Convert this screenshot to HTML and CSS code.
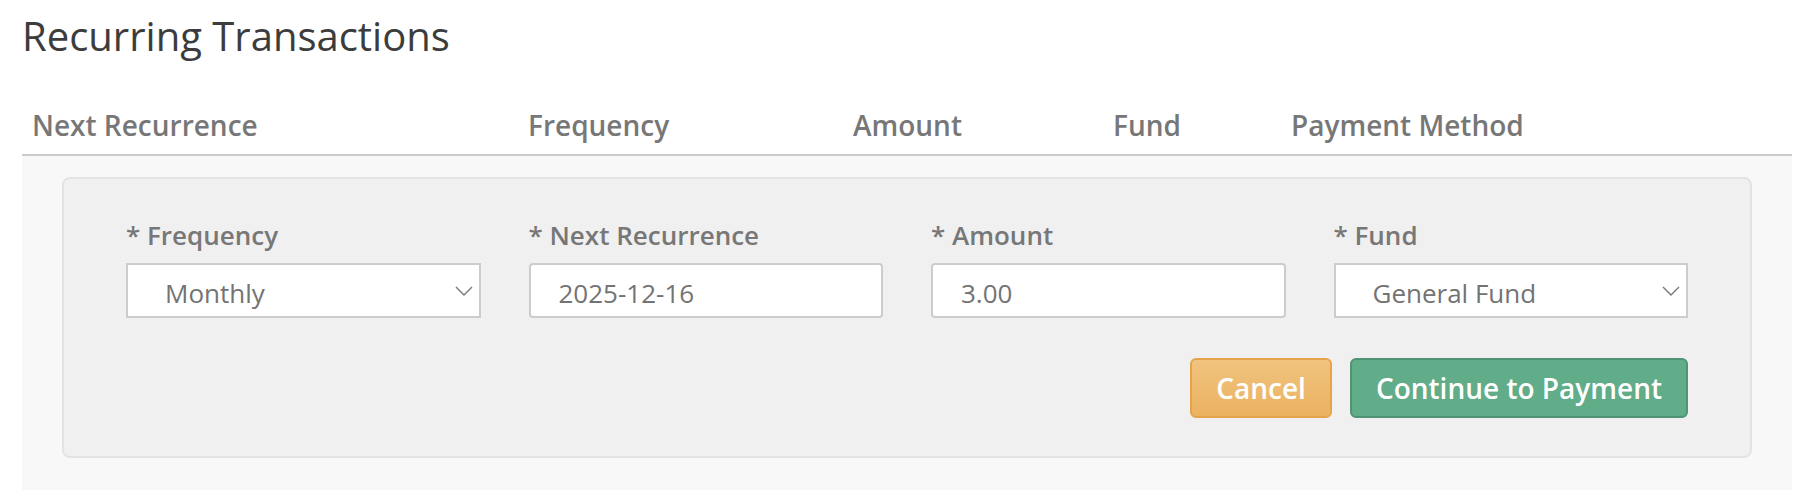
FILE: index.html
```html
<!DOCTYPE html>
<html lang="en">
<head>
<meta charset="utf-8">
<title>Recurring Transactions</title>
<link rel="stylesheet" href="styles.css">
</head>
<body>
<div class="page">
  <h1 class="title">Recurring Transactions</h1>
  <div class="table">
    <div class="thead">
      <div class="th">Next Recurrence</div>
      <div class="th">Frequency</div>
      <div class="th">Amount</div>
      <div class="th">Fund</div>
      <div class="th">Payment Method</div>
    </div>
    <div class="tbody">
      <div class="well">
        <div class="fields">
          <div class="field">
            <label class="label">* Frequency</label>
            <div class="select-wrap">
              <select class="control select"><option>Monthly</option></select>
              <svg class="chevron" width="18" height="10" viewBox="0 0 18 10"><path d="M1 1 L9 9 L17 1" fill="none" stroke="#777" stroke-width="1.4"/></svg>
            </div>
          </div>
          <div class="field">
            <label class="label">* Next Recurrence</label>
            <input class="control input" type="text" value="2025-12-16">
          </div>
          <div class="field">
            <label class="label">* Amount</label>
            <input class="control input" type="text" value="3.00">
          </div>
          <div class="field">
            <label class="label">* Fund</label>
            <div class="select-wrap">
              <select class="control select"><option>General Fund</option></select>
              <svg class="chevron" width="18" height="10" viewBox="0 0 18 10"><path d="M1 1 L9 9 L17 1" fill="none" stroke="#777" stroke-width="1.4"/></svg>
            </div>
          </div>
        </div>
        <div class="actions">
          <button class="btn btn-cancel" type="button">Cancel</button>
          <button class="btn btn-primary" type="button">Continue to Payment</button>
        </div>
      </div>
    </div>
  </div>
</div>
</body>
</html>
```
FILE: styles.css
```css
body {
  margin: 0;
  background: #fff;
  font-family: "Open Sans", "Noto Sans", sans-serif;
}

.page {
  padding: 12px 12px 0 22px;
}

.title {
  margin: 0 0 37px;
  font-size: 40px;
  font-weight: 400;
  line-height: 48px;
  color: #3c3c3c;
}

.thead {
  display: grid;
  grid-template-columns: 496px 325px 260px 178px 1fr;
  border-bottom: 2px solid #cccccc;
}

.th {
  padding: 8px 8px 9px 10px;
  font-size: 28px;
  font-weight: 600;
  line-height: 40px;
  color: #777;
}

.tbody {
  background: #f8f8f8;
  padding: 21px 40px 40px;
}

.well {
  background: #f0f0f0;
  border: 2px solid #e3e3e3;
  border-radius: 8px;
  padding: 38px 62px 38px;
}

.fields {
  display: grid;
  grid-template-columns: repeat(4, 1fr);
  column-gap: 48px;
}

.label {
  display: block;
  font-size: 26px;
  font-weight: 600;
  line-height: 36px;
  color: #777;
  margin-bottom: 10px;
}

.select-wrap {
  position: relative;
}

.control {
  display: block;
  width: 100%;
  height: 55px;
  box-sizing: border-box;
  margin: 0;
  border: 2px solid #cccccc;
  background: #fff;
  font-family: "Open Sans", "Noto Sans", sans-serif;
  font-size: 26px;
  font-weight: 400;
  color: #737373;
  padding: 4px 20px 0 28px;
  outline: none;
}

.input {
  border-radius: 4px;
}

.select {
  appearance: none;
  -webkit-appearance: none;
  border-radius: 0;
  padding-left: 37px;
}

.chevron {
  position: absolute;
  right: 8px;
  top: 23px;
  pointer-events: none;
}

.actions {
  display: flex;
  justify-content: flex-end;
  gap: 18px;
  margin-top: 40px;
}

.btn {
  height: 60px;
  box-sizing: border-box;
  padding: 0 24px;
  border: 2px solid;
  border-radius: 6px;
  font-family: "Open Sans", "Noto Sans", sans-serif;
  font-size: 28px;
  font-weight: 600;
  color: #fff;
  cursor: pointer;
}

.btn-cancel {
  background: linear-gradient(#f0c37f, #ebb260);
  border-color: #e5a449;
}

.btn-primary {
  background: #61ac89;
  border-color: #4f9473;
}
```
